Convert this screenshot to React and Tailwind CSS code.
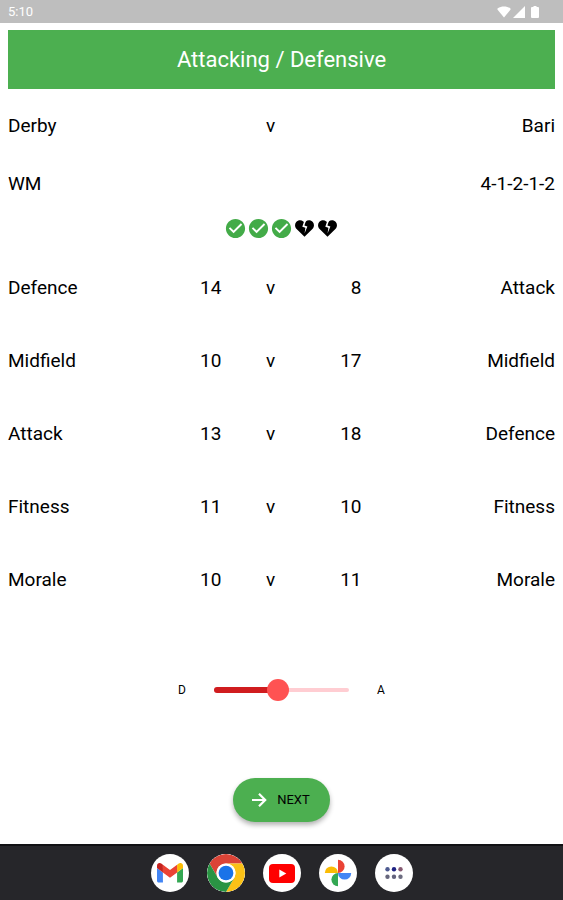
import { useState } from 'react';
import { MdCheckCircle } from 'react-icons/md';

const stats = [
  { home: 'Defence', homeValue: 14, awayValue: 8, away: 'Attack' },
  { home: 'Midfield', homeValue: 10, awayValue: 17, away: 'Midfield' },
  { home: 'Attack', homeValue: 13, awayValue: 18, away: 'Defence' },
  { home: 'Fitness', homeValue: 11, awayValue: 10, away: 'Fitness' },
  { home: 'Morale', homeValue: 10, awayValue: 11, away: 'Morale' },
];

const form = [true, true, true, false, false];

function StatusBar() {
  return (
    <div className="flex h-[23px] items-center justify-between bg-[#bebebe] pl-2 pr-6 pt-px text-white">
      <span className="text-[13px] leading-4">5:10</span>
      <div className="flex items-center">
        <svg viewBox="0 0 14 12" className="mr-0.5 h-3 w-3.5" fill="currentColor">
          <path d="M7 11.6.6 3.8C.2 3.2.3 2.6.8 2.2 4.3-.2 9.7-.2 13.2 2.2c.5.4.6 1 .2 1.6Z" />
        </svg>
        <svg viewBox="0 0 12 12" className="mr-1.5 size-3" fill="currentColor">
          <path d="M12 0v12H0Z" />
        </svg>
        <svg viewBox="0 0 8 12" className="h-3 w-2" fill="currentColor">
          <path d="M2.5 0h3v1H7a1 1 0 0 1 1 1v9a1 1 0 0 1-1 1H1a1 1 0 0 1-1-1V2a1 1 0 0 1 1-1h1.5Z" />
        </svg>
      </div>
    </div>
  );
}

function BrokenHeartIcon() {
  return (
    <svg viewBox="0 0 19 17" className="h-[17px] w-[19px] shrink-0">
      <path
        fill="#000"
        d="M9.5 16.8 1.6 8.9C-.3 7-.5 3.9 1.2 2 3.1-.1 6.3-.2 8.3 1.5l1.2 1 1.2-1c2-1.700 5.200-1.600 7.100.5 1.700 1.900 1.500 5-.4 6.900Z"
      />
      <path fill="#fff" d="m9.300.8-2 5.900 3.100 1-.8 5.600 2.800-6.700-3-1.100L10.900 1Z" />
    </svg>
  );
}

function ArrowIcon() {
  return (
    <svg viewBox="0 0 20 20" className="size-5 text-white" fill="none" stroke="currentColor" strokeWidth="2.2">
      <path d="M3 10h13M10 3.800l6.200 6.200-6.200 6.200" />
    </svg>
  );
}

function Columns() {
  return (
    <colgroup>
      <col className="w-[25%]" />
      <col className="w-[14%]" />
      <col className="w-[18%]" />
      <col className="w-[8%]" />
      <col className="w-[35%]" />
    </colgroup>
  );
}

function TacticSlider() {
  const [value, setValue] = useState(47);

  return (
    <div className="flex items-center justify-center text-[12px]">
      <span className="w-2">D</span>
      <div className="relative mx-7 flex h-6 w-[135px] items-center">
        <div className="absolute inset-x-0 h-1 rounded-full bg-[#ffcdd2]" />
        <div className="absolute left-0 h-1.5 rounded-full bg-[#d01c1f]" style={{ width: `${value}%` }} />
        <input
          type="range"
          min="0"
          max="100"
          value={value}
          onChange={(e) => setValue(Number(e.target.value))}
          aria-label="Defensive to attacking"
          className="relative m-0 h-6 w-full cursor-pointer appearance-none bg-transparent [&::-webkit-slider-thumb]:size-[22px] [&::-webkit-slider-thumb]:appearance-none [&::-webkit-slider-thumb]:rounded-full [&::-webkit-slider-thumb]:bg-[#ff5252]"
        />
      </div>
      <span className="w-2">A</span>
    </div>
  );
}

function GmailIcon() {
  return (
    <svg viewBox="52 42 88 66" className="w-[26px]">
      <path fill="#4285f4" d="M58 108h14V74L52 59v43c0 3.320 2.690 6 6 6" />
      <path fill="#34a853" d="M120 108h14c3.320 0 6-2.690 6-6V59l-20 15" />
      <path fill="#fbbc04" d="M120 48v26l20-15v-8c0-7.420-8.470-11.650-14.400-7.200" />
      <path fill="#ea4335" d="M72 74V48l24 18 24-18v26L96 92" />
      <path fill="#c5221f" d="M52 51v8l20 15V48l-5.600-4.200c-5.940-4.450-14.400-.22-14.400 7.200" />
    </svg>
  );
}

function ChromeIcon() {
  return (
    <svg viewBox="0 0 48 48" className="size-full">
      <circle cx="24" cy="24" r="24" fill="#fff" />
      <path fill="#db4437" d="M3.220 12a24 24 0 0 1 41.560 0H24a12 12 0 0 0-10.390 18Z" />
      <path fill="#fbc116" d="M44.780 12A24 24 0 0 1 24 48l10.390-18A12 12 0 0 0 24 12Z" />
      <path fill="#2a9444" d="M24 48A24 24 0 0 1 3.220 12l10.390 18a12 12 0 0 0 20.780 0Z" />
      <circle cx="24" cy="24" r="12" fill="#fff" />
      <circle cx="24" cy="24" r="9.300" fill="#1a73e8" />
    </svg>
  );
}

function YoutubeIcon() {
  return (
    <svg viewBox="0 0 26 19" className="w-[26px]">
      <rect width="26" height="19" rx="4" fill="#f00" />
      <path fill="#fff" d="m10.300 5.500 7 4-7 4Z" />
    </svg>
  );
}

function PhotosIcon() {
  return (
    <svg viewBox="0 0 28 28" className="size-7">
      <path fill="#ea4335" d="M14 .8a6.600 6.600 0 0 1 0 13.200Z" />
      <path fill="#4285f4" d="M27.200 14a6.600 6.600 0 0 1-13.200 0Z" />
      <path fill="#34a853" d="M14 27.200A6.600 6.600 0 0 1 14 14Z" />
      <path fill="#fbbc04" d="M.8 14A6.600 6.600 0 0 1 14 14Z" />
    </svg>
  );
}

function AppsIcon() {
  return (
    <svg viewBox="0 0 18 12" className="w-[18px]">
      <circle cx="2.500" cy="2.300" r="2.200" fill="#4d5a90" />
      <circle cx="9" cy="2.300" r="2.200" fill="#1f2382" />
      <circle cx="15.500" cy="2.300" r="2.200" fill="#865a72" />
      <circle cx="2.500" cy="9.700" r="2.200" fill="#66667c" />
      <circle cx="9" cy="9.700" r="2.200" fill="#62627c" />
      <circle cx="15.500" cy="9.700" r="2.200" fill="#6c6c80" />
    </svg>
  );
}

const dock = [
  { name: 'Gmail', Icon: GmailIcon },
  { name: 'Chrome', Icon: ChromeIcon },
  { name: 'YouTube', Icon: YoutubeIcon },
  { name: 'Photos', Icon: PhotosIcon },
  { name: 'All apps', Icon: AppsIcon },
];

export default function App() {
  return (
    <div className="flex min-h-screen flex-col bg-white font-[Roboto,sans-serif] text-black">
      <StatusBar />

      <main className="flex flex-1 flex-col px-2 pt-[7px]">
        <h1 className="bg-[#4caf50] pt-4 pb-[15px] text-center text-[22px] leading-7 text-white">
          Attacking / Defensive
        </h1>

        <table className="mt-2 w-full table-fixed text-[19px] leading-6">
          <Columns />
          <tbody>
            <tr className="h-[58px]">
              <td colSpan="2">Derby</td>
              <td className="text-center">v</td>
              <td colSpan="2" className="text-right">Bari</td>
            </tr>
            <tr className="h-[58px]">
              <td colSpan="2">WM</td>
              <td />
              <td colSpan="2" className="text-right">4-1-2-1-2</td>
            </tr>
          </tbody>
        </table>

        <div className="flex h-[30px] items-center justify-center">
          {form.map((good, i) => (
            <span key={i} className="flex w-[23px] justify-center">
              {good ? <MdCheckCircle className="size-[23px] shrink-0 text-[#43ab48]" /> : <BrokenHeartIcon />}
            </span>
          ))}
        </div>

        <table className="mt-2 w-full table-fixed text-[19px] leading-6">
          <Columns />
          <tbody>
            {stats.map((stat) => (
              <tr key={stat.home} className="h-[73px]">
                <td>{stat.home}</td>
                <td className="text-right">{stat.homeValue}</td>
                <td className="text-center">v</td>
                <td className="pr-0.5 text-right">{stat.awayValue}</td>
                <td className="text-right">{stat.away}</td>
              </tr>
            ))}
          </tbody>
        </table>

        <div className="mt-[62px]">
          <TacticSlider />
        </div>

        <button
          type="button"
          className="mx-auto mt-[76px] mb-[22px] flex h-11 items-center gap-2 rounded-full bg-[#4caf50] pr-5 pl-4 text-[13px] shadow-[0_3px_5px_rgba(0,0,0,0.3)]"
        >
          <ArrowIcon />
          NEXT
        </button>
      </main>

      <nav className="flex h-14 items-center justify-center gap-[18px] border-t-2 border-[#111114] bg-[#26262a]">
        {dock.map(({ name, Icon }) => (
          <button
            key={name}
            type="button"
            aria-label={name}
            className="flex size-[38px] items-center justify-center overflow-hidden rounded-full bg-white"
          >
            <Icon />
          </button>
        ))}
      </nav>
    </div>
  );
}
